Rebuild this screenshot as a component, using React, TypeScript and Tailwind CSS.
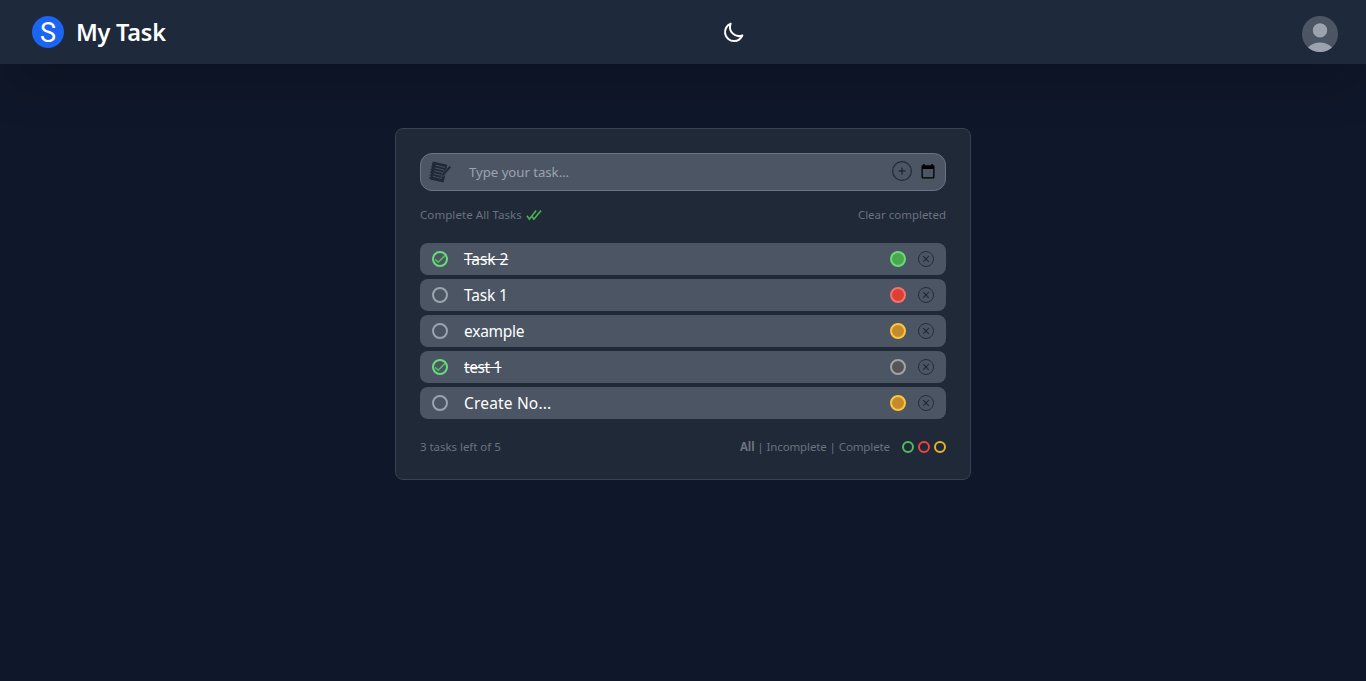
import React from "react";
import { HiOutlineMoon } from "react-icons/hi";

type Tone = "green" | "red" | "yellow" | "gray";
type Task = { title: string; done: boolean; tone: Tone; tracking: string };

const tasks: Task[] = [
  { title: "Task 2", done: true, tone: "green", tracking: "tracking-[-0.05px]" },
  { title: "Task 1", done: false, tone: "red", tracking: "tracking-[-0.15px]" },
  { title: "example", done: false, tone: "yellow", tracking: "tracking-[-0.25px]" },
  { title: "test 1", done: true, tone: "gray", tracking: "tracking-[-0.45px]" },
  { title: "Create No...", done: false, tone: "yellow", tracking: "tracking-[0.17px]" },
];

const tones: Record<Tone, string> = {
  green: "border-[#69db7c] bg-[#4ca64c]",
  red: "border-[#f87171] bg-[#dc4030]",
  yellow: "border-[#fcc737] bg-[#c68a2e]",
  gray: "border-[#a3a3a3] bg-[#555555]",
};

function NotesIcon() {
  return (
    <svg width="24" height="24" viewBox="0 0 24 24" className="text-[#1f2937]">
      <path d="M4.8 1.5 L19.3 4.8 L18.2 9.2 L14.8 15 L17.1 15.6 L15.6 22.5 L2 19.4 Z" fill="currentColor" />
      <path d="M7.6 5.2 L17 7.4 M7 8 L16.4 10.2 M6.4 10.8 L14.6 12.7 M5.8 13.6 L12.6 15.2 M5.2 16.4 L14 18.5" stroke="#4b5563" strokeWidth=".9" />
      <path d="M13.2 16.8 L14 13.8 L21.3 5.8 L23.3 7.4 L16 15.6 Z" fill="currentColor" stroke="#4b5563" strokeWidth=".7" />
      <path d="M3.9 3.8h2 M3.2 6.6h2 M2.6 9.4h2 M2 12.2h2 M1.4 15h2 M1 17.8h2" stroke="currentColor" strokeWidth="1.2" />
    </svg>
  );
}

function CalendarIcon() {
  return (
    <svg width="14" height="15" viewBox="0 0 14 15" fill="none">
      <path d="M3 0v2M11 0v2" stroke="#000" strokeWidth="1.5" />
      <path d="M1.7 1.2h10.6a1.2 1.2 0 0 1 1.2 1.2v10.9a1.2 1.2 0 0 1-1.2 1.2H1.7a1.2 1.2 0 0 1-1.2-1.2V2.4a1.2 1.2 0 0 1 1.2-1.2zM1.8 5v8.2h10.4V5z" fill="#000" fillRule="evenodd" />
    </svg>
  );
}

function TaskRow({ title, done, tone, tracking }: Task) {
  return (
    <li className="flex h-8 items-center rounded-lg bg-[#4b5563] px-3">
      <span
        className={`flex size-4 items-center justify-center rounded-full border-2 ${done ? "border-[#69db7c]" : "border-[#9ca3af]"}`}
      >
        {done && (
          <svg width="14" height="14" viewBox="0 0 14 14" fill="none" className="shrink-0">
            <path d="M2.2 7.4 L5.3 10.2 L12 3.4" stroke="#52c15c" strokeWidth="1.5" />
          </svg>
        )}
      </span>
      <span className={`ml-4 flex-1 text-[15.5px] leading-6 text-white ${tracking} ${done ? "line-through" : ""}`}>{title}</span>
      <span className={`size-4 rounded-full border-2 ${tones[tone]}`} />
      <svg width="16" height="16" viewBox="0 0 16 16" fill="none" stroke="#1f2937" className="ml-3">
        <circle cx="8" cy="8" r="7.5" strokeWidth=".9" />
        <path d="M5.2 5.2l5.6 5.6M10.8 5.2l-5.6 5.6" strokeWidth="1.1" />
      </svg>
    </li>
  );
}

export default function App() {
  return (
    <div className="min-h-screen bg-[#0f172a] font-['Noto_Sans',sans-serif]">
      <header className="flex h-16 items-center justify-between bg-[#1e293b] pr-7 pl-8 shadow-2xl">
        <div className="flex items-center">
          <div className="flex size-8 items-center justify-center rounded-full bg-[#1c64f2] pt-0.5 font-['Roboto',sans-serif] text-[27px] leading-none text-white">
            S
          </div>
          <h1 className="ml-3 text-[23.5px] leading-8 font-semibold tracking-[-0.25px] text-white">My Task</h1>
        </div>
        <HiOutlineMoon className="size-6 text-white" />
        <div className="relative mt-1 size-9 overflow-hidden rounded-full bg-[#4b5563]">
          <svg className="absolute -left-1.5 size-12 text-[#9ca3af]" fill="currentColor" viewBox="0 0 20 20">
            <path d="M10 9a3 3 0 100-6 3 3 0 000 6zm-7 9a7 7 0 1114 0H3z" />
          </svg>
        </div>
      </header>

      <main className="mx-auto mt-16 h-[352px] w-[576px] rounded-lg border border-[#374151] bg-[#1f2937] p-6">
        <div className="flex h-[38px] items-center rounded-xl border border-[#6b7280] bg-[#4b5563] pr-2.5 pl-[7px]">
          <NotesIcon />
          <span className="ml-[17px] flex-1 text-[13.3px] leading-5 tracking-[-0.08px] text-[#9ca3af]">Type your task...</span>
          <svg width="20" height="20" viewBox="0 0 20 20" fill="none" stroke="#1f2937" className="mb-0.5">
            <circle cx="10" cy="10" r="9.4" strokeWidth="1.2" />
            <path d="M10 6.6v6.8M6.6 10h6.8" strokeWidth="1.4" />
          </svg>
          <span className="mb-px ml-[9px]"><CalendarIcon /></span>
        </div>

        <div className="mt-4 flex h-4 items-center justify-between text-[11.5px] leading-4 text-[#6b7280]">
          <span className="flex items-center gap-1 tracking-[0.08px]">
            Complete All Tasks
            <svg width="16" height="12" viewBox="0 0 16 12" fill="none" stroke="#4caf50" strokeWidth="1.7">
              <path d="M1 6.8l2.4 3.4L10.2 1.5M5.8 7.2l2.1 3L15 1.5" />
            </svg>
          </span>
          <span className="tracking-[-0.02px]">Clear completed</span>
        </div>

        <ul className="mt-5 flex flex-col gap-1">
          {tasks.map((task) => (
            <TaskRow key={task.title} {...task} />
          ))}
        </ul>

        <footer className="mt-5 flex h-4 items-center justify-between text-[11.5px] leading-4 text-[#6b7280]">
          <span className="tracking-[-0.04px]">3 tasks left of 5</span>
          <div className="flex items-center">
            <span className="tracking-[-0.11px]"><b className="font-bold">All</b> | Incomplete | Complete</span>
            <span className="ml-3 flex gap-1">
              <i className="size-3 rounded-full border-2 border-[#4fbd5c]" />
              <i className="size-3 rounded-full border-2 border-[#ef4444]" />
              <i className="size-3 rounded-full border-2 border-[#eab030]" />
            </span>
          </div>
        </footer>
      </main>
    </div>
  );
}
